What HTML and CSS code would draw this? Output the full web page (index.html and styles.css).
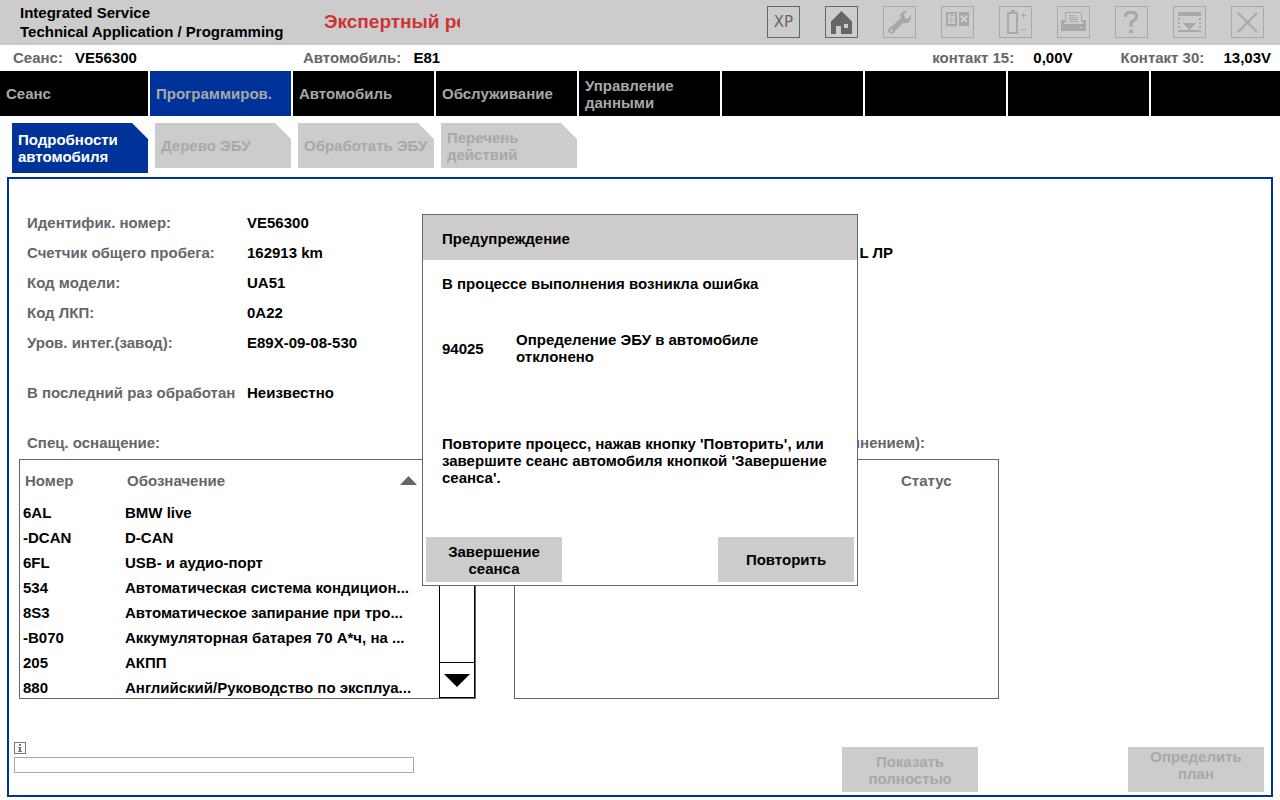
FILE: index.html
```html
<!DOCTYPE html>
<html lang="ru">
<head>
<meta charset="utf-8">
<meta name="viewport" content="width=device-width, initial-scale=1">
<title>Integrated Service Technical Application / Programming</title>
<link rel="stylesheet" href="styles.css">
</head>
<body>
<header class="topbar">
  <h1 class="app-title">Integrated Service<br>Technical Application / Programming</h1>
  <p class="mode">Экспертный режим</p>
  <div class="tools">
    <button class="tool tool-on">XP</button>
    <button class="tool tool-on" aria-label="Главная"><svg viewBox="0 0 33 32" shape-rendering="crispEdges"><path fill="currentColor" fill-rule="evenodd" d="M16.500 5L27 15v13H16v-8h-5v8H6V15zM19 18v4h4v-4z"/></svg></button>
    <button class="tool" disabled aria-label="Сервис"><svg viewBox="0 0 33 32"><path fill="currentColor" fill-rule="evenodd" d="M18 12l-1-3 2-3 3-1h2l-3 4 1 3 3 1 3-4v4l-3 4h-5l-8 8-1 2-2 1-3-1-1-2 1-3 2-1zM8 23v1H7v1h1v1h1v-1h1v-1H9v-1z"/></svg></button>
    <button class="tool" disabled aria-label="Документация"><svg viewBox="0 0 33 32" shape-rendering="crispEdges"><path fill="currentColor" fill-rule="evenodd" d="M5 6h11v14H5zM7 8v10h7V8zM18 6h10v14H18z"/><path stroke="currentColor" d="M9 9.500h4M9 11.500h2M9 13.500h4M9 15.500h2"/><path class="cut" d="M20 10l6 6M26 10l-6 6"/></svg></button>
    <button class="tool" disabled aria-label="Аккумулятор"><svg viewBox="0 0 33 32" shape-rendering="crispEdges"><path fill="currentColor" fill-rule="evenodd" d="M12 4h4v2h3v22H8V6h4zM10 8v18h7V8z"/><path stroke="currentColor" d="M22 9.500h5M24.500 7v5M22 23.500h5"/></svg></button>
    <button class="tool" disabled aria-label="Печать"><svg viewBox="0 0 33 32" shape-rendering="crispEdges"><path fill="currentColor" fill-rule="evenodd" d="M4 14h4V6h17v8h4v11H4zM9 7v9H7v2h19v-2h-2V7zM23 21v1h2v-1z"/><path stroke="currentColor" d="M12 9.500h6M12 11.500h9M12 13.500h9M12 15.500h9"/></svg></button>
    <button class="tool" disabled aria-label="Справка"><svg viewBox="0 0 33 32"><path fill="none" stroke="currentColor" stroke-width="3" d="M10.500 11V9l2-2.500h7L21.500 9v3L16 17v4"/><path fill="currentColor" d="M14 24h4v3h-4z"/></svg></button>
    <button class="tool" disabled aria-label="Свернуть"><svg viewBox="0 0 33 32" shape-rendering="crispEdges"><path fill="currentColor" d="M5 6h23v4H5zM10 17h13l-6.500 7zM5 24h23v2H5z"/><path fill="none" stroke="currentColor" stroke-width="2" stroke-dasharray="2 2" d="M6 12v10M27 12v10"/></svg></button>
    <button class="tool" disabled aria-label="Закрыть"><svg viewBox="0 0 33 32"><path fill="none" stroke="currentColor" stroke-width="2" d="M7 7l19 19M26 7L7 26"/></svg></button>
  </div>
</header>

<div class="status">
  <span class="status-session">Сеанс: <b>VE56300</b></span>
  <span class="status-car">Автомобиль: <b>E81</b></span>
  <span class="volt">контакт 15: <b>0,00V</b></span>
  <span class="volt">Контакт 30: <b>13,03V</b></span>
</div>

<nav class="mainnav">
  <button>Сеанс</button>
  <button class="current">Программиров.</button>
  <button>Автомобиль</button>
  <button>Обслуживание</button>
  <button>Управление данными</button>
  <span></span><span></span><span></span><span></span>
</nav>

<nav class="subnav">
  <button class="current">Подробности автомобиля</button>
  <button disabled>Дерево ЭБУ</button>
  <button disabled>Обработать ЭБУ</button>
  <button disabled>Перечень действий</button>
</nav>

<main class="panel">
  <div class="columns">
    <section class="column">
      <dl class="facts">
        <dt>Идентифик. номер:</dt><dd>VE56300</dd>
        <dt>Счетчик общего пробега:</dt><dd>162913 km</dd>
        <dt>Код модели:</dt><dd>UA51</dd>
        <dt>Код ЛКП:</dt><dd>0A22</dd>
        <dt>Уров. интег.(завод):</dt><dd>E89X-09-08-530</dd>
        <dt class="spaced">В последний раз обработан</dt><dd class="spaced">Неизвестно</dd>
      </dl>
      <h2 class="caption">Спец. оснащение:</h2>
      <div class="listbox">
        <div class="rows">
          <table class="equipment">
            <thead><tr><th class="code">Номер</th><th><span class="sort">Обозначение <svg viewBox="0 0 17 9"><path fill="currentColor" d="M8.500 0L17 9H0z"/></svg></span></th></tr></thead>
            <tbody>
              <tr><td>6AL</td><td>BMW live</td></tr>
              <tr><td>-DCAN</td><td>D-CAN</td></tr>
              <tr><td>6FL</td><td>USB- и аудио-порт</td></tr>
              <tr><td>534</td><td>Автоматическая система кондицион...</td></tr>
              <tr><td>8S3</td><td>Автоматическое запирание при тро...</td></tr>
              <tr><td>-B070</td><td>Аккумуляторная батарея 70 А*ч, на ...</td></tr>
              <tr><td>205</td><td>АКПП</td></tr>
              <tr><td>880</td><td>Английский/Руководство по эксплуа...</td></tr>
            </tbody>
          </table>
        </div>
        <div class="scrollbar"><button aria-label="Вниз"><svg viewBox="0 0 26 13"><path fill="currentColor" d="M0 0h26L13 13z"/></svg></button></div>
      </div>
    </section>
    <section class="column">
      <p class="model">L ЛР</p>
      <h2 class="caption caption-end">лнением):</h2>
      <div class="listbox"><div class="rows"><table class="actions"><thead><tr><th>Статус</th></tr></thead></table></div></div>
    </section>
  </div>
  <footer class="bottom">
    <div class="progress">
      <svg viewBox="0 0 12 12" shape-rendering="crispEdges"><path fill="none" stroke="currentColor" d="M.5.5h11v11H.500z"/><path fill="currentColor" d="M5 2h2v2H5zM4 5h3v4h1v1H4V9h1V6H4z"/></svg>
      <progress value="0" max="100" aria-label="Ход выполнения"></progress>
    </div>
    <button class="btn" disabled>Показать полностью</button>
    <button class="btn btn-top" disabled>Определить план</button>
  </footer>
</main>

<div class="overlay">
  <div class="dialog" role="alertdialog" aria-labelledby="dialog-title">
    <h2 class="dialog-title" id="dialog-title">Предупреждение</h2>
    <div class="dialog-body">
      <p>В процессе выполнения возникла ошибка</p>
      <div class="error"><span>94025</span><span>Определение ЭБУ в автомобиле отклонено</span></div>
      <p>Повторите процесс, нажав кнопку 'Повторить', или завершите сеанс автомобиля кнопкой 'Завершение сеанса'.</p>
    </div>
    <div class="dialog-actions">
      <button class="btn">Завершение сеанса</button>
      <button class="btn">Повторить</button>
    </div>
  </div>
</div>
</body>
</html>
```
FILE: styles.css
```css
* { box-sizing: border-box; }

body {
  margin: 0;
  min-height: 100vh;
  display: flex;
  flex-direction: column;
  background: #fff;
  color: #000;
  font: bold 15px/17px "Liberation Sans", Arial, sans-serif;
}

h1, h2, p, dl, dd { margin: 0; font-size: inherit; font-weight: inherit; }
button { font: inherit; color: inherit; border: 0; border-radius: 0; padding: 0; }
b { font-weight: inherit; color: #000; }
svg { display: block; }

.topbar {
  display: flex;
  align-items: center;
  height: 45px;
  padding: 0 16px 2px 20px;
  background: #ccc;
}
.app-title { width: 304px; line-height: 19px; }
.mode {
  width: 136px;
  overflow: hidden;
  white-space: nowrap;
  color: #c33;
  font-size: 19px;
  line-height: 24px;
}
.tools { display: flex; gap: 25px; margin-left: auto; }
.tool {
  width: 33px;
  height: 32px;
  border: 1px solid currentColor;
  background: none;
  color: #a8a8a8;
  font: 15px "DejaVu Sans", sans-serif;
}
.tool svg { width: 33px; height: 32px; margin: -1px; }
.tool-on { color: #666; }
.cut { stroke: #ccc; stroke-width: 2; }

.status {
  display: flex;
  align-items: center;
  height: 26px;
  padding: 0 9px 2px 13px;
  color: #666;
}
.status b { margin-left: 8px; }
.status-session { width: 290px; }
.status-car { margin-right: auto; }
.status .volt b { margin-left: 15px; }
.volt + .volt { margin-left: 48px; }

.mainnav {
  display: grid;
  grid-template-columns: 148fr repeat(7, 141fr) 129fr;
  gap: 2px;
  height: 45px;
}
.mainnav > * { min-width: 0; padding: 0 6px; background: #000; color: #a8a8a8; text-align: left; }
.mainnav .current { background: #039; }

.subnav { display: flex; gap: 7px; height: 61px; padding: 7px 12px 0; }
.subnav button {
  width: 136px;
  height: 45px;
  padding: 0 0 0 6px;
  background: #ccc;
  color: #a8a8a8;
  text-align: left;
  clip-path: polygon(0 0, calc(100% - 16px) 0, 100% 16px, 100% 100%, 0 100%);
}
.subnav .current { height: 50px; background: #039; color: #fff; }

.panel {
  flex: 1;
  display: flex;
  flex-direction: column;
  justify-content: space-between;
  margin: 0 7px 3px;
  border: 2px solid #039;
}
.columns {
  display: grid;
  grid-template-columns: 457fr 485fr 234fr;
  gap: 38px;
  padding: 29px 0 0 10px;
}
.column { display: flex; flex-direction: column; min-width: 0; }
.facts {
  display: grid;
  grid-template-columns: 217px 1fr;
  column-gap: 3px;
  padding-left: 8px;
  line-height: 30px;
}
.facts dt { white-space: nowrap; color: #666; }
.facts .spaced { margin-top: 20px; }
.caption { margin-top: 20px; padding-left: 8px; color: #666; line-height: 30px; }
.caption-end { margin-top: auto; padding-right: 74px; text-align: right; }
.model { padding: 30px 106px 0 0; text-align: right; line-height: 30px; }

.listbox {
  display: flex;
  height: 240px;
  margin-top: 1px;
  border: 1px solid #666;
  overflow: hidden;
}
.rows { flex: 1; min-width: 0; }
.equipment, .actions { width: 100%; table-layout: fixed; border-collapse: collapse; }
th { height: 40px; padding: 0 5px; color: #666; font-weight: inherit; text-align: left; }
td { height: 25px; padding: 0 3px; overflow: hidden; white-space: nowrap; text-overflow: ellipsis; }
.code { width: 102px; }
.sort { display: flex; align-items: center; justify-content: space-between; padding-right: 17px; }
.sort svg { width: 17px; height: 9px; }
.actions th { padding-left: 386px; }
.scrollbar { display: flex; flex-direction: column; justify-content: flex-end; width: 36px; border: 1px solid #000; }
.scrollbar button { display: grid; place-items: center; height: 35px; border-top: 1px solid #000; background: #fff; }
.scrollbar svg { width: 26px; height: 13px; }

.bottom { display: flex; gap: 150px; padding: 0 7px 3px 5px; }
.progress { width: 400px; margin: -5px auto 0 0; color: #777; }
.progress svg { width: 12px; height: 12px; }
progress {
  appearance: none;
  display: block;
  width: 100%;
  height: 16px;
  margin-top: 3px;
  border: 1px solid #a8a8a8;
  background: #fff;
}
progress::-webkit-progress-bar { background: #fff; }
progress::-webkit-progress-value { background: #039; }

.btn { width: 136px; height: 45px; padding: 0 16px; background: #ccc; }
.btn:disabled { color: #a8a8a8; }
.btn-top { padding-bottom: 10px; }

.overlay { position: fixed; inset: 0; display: grid; place-items: center; }
.dialog { width: 436px; border: 1px solid #666; background: #fff; }
.dialog-title { padding: 15px 19px 13px; background: #ccc; }
.dialog-body { padding: 15px 19px 51px; }
.error { display: grid; grid-template-columns: 74px 260px; align-items: center; margin: 39px 0 70px; }
.dialog-actions { display: flex; justify-content: space-between; padding: 0 3px 3px; }
```
